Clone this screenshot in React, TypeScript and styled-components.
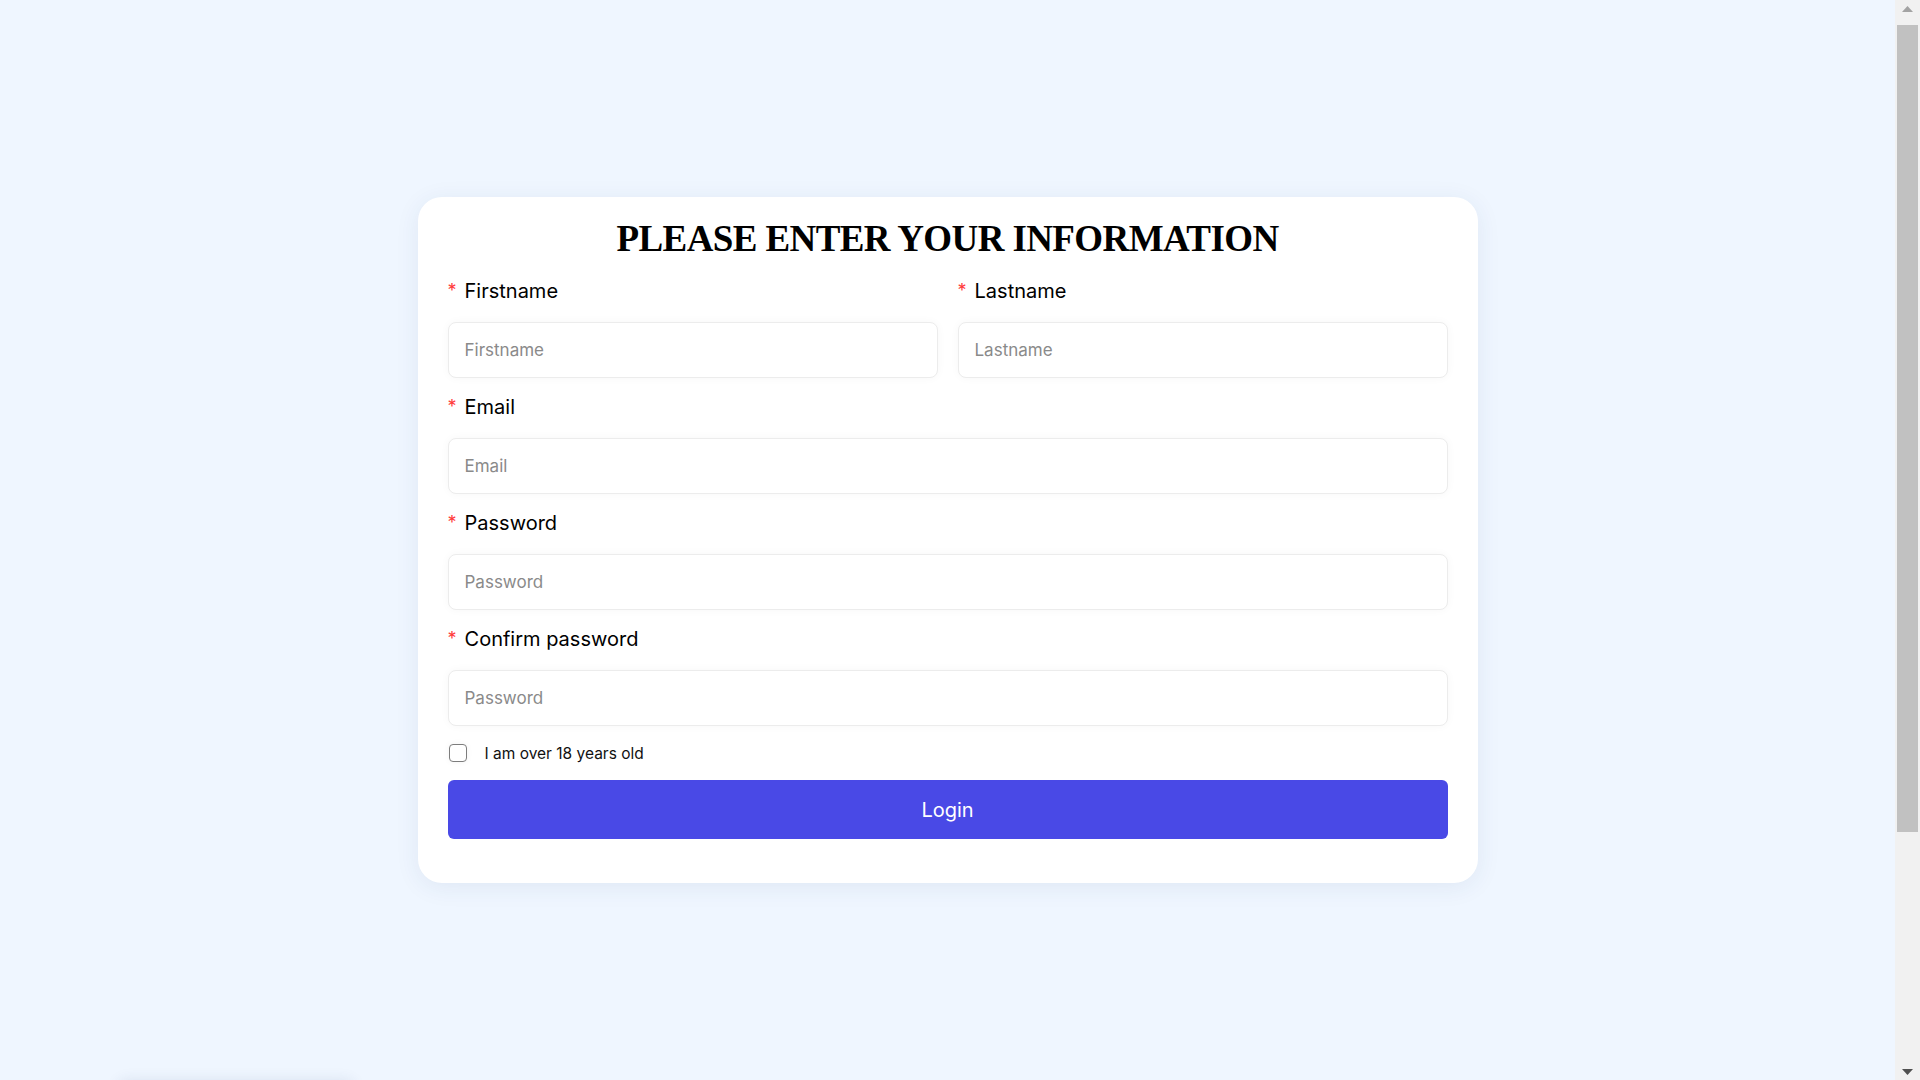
import React from "react";
import styled, { createGlobalStyle } from "styled-components";

const GlobalStyle = createGlobalStyle`
  html, body {
    margin: 0;
    padding: 0;
    background: #eff6ff;
  }
  body {
    font-family: Inter, "Noto Sans", Arial, sans-serif;
    color: #111;
  }
  * { box-sizing: border-box; }
`;

const Shell = styled.div`
  margin-right: 25px;
`;

const Page = styled.main`
  min-height: 100vh;
  display: flex;
  align-items: center;
  justify-content: center;
`;

const Card = styled.section`
  width: 1060px;
  background: #ffffff;
  border-radius: 24px;
  padding: 20px 30px 44px;
  box-shadow: 0 4px 24px rgba(40, 60, 110, 0.08);
`;

const Title = styled.h1`
  margin: 0 0 15px;
  text-align: center;
  font-family: "Liberation Serif", "Times New Roman", serif;
  font-weight: 700;
  font-size: 37px;
  line-height: 44px;
  letter-spacing: -0.6px;
  color: #000;
`;

const Form = styled.form`
  display: flex;
  flex-direction: column;
  gap: 14px;
`;

const TwoCols = styled.div`
  display: grid;
  grid-template-columns: 1fr 1fr;
  column-gap: 20px;
`;

const Field = styled.div`
  display: flex;
  flex-direction: column;
`;

const Label = styled.label`
  display: flex;
  align-items: baseline;
  height: 30px;
  font-size: 20px;
  line-height: 30px;
  margin-bottom: 16px;
  color: #000;
`;

const Required = styled.span`
  color: #ff3b3b;
  font-size: 18px;
  line-height: 1;
  margin-right: 8px;
  transform: translateY(-1px);
`;

const Input = styled.input`
  height: 56px;
  width: 100%;
  border: 1px solid #ececec;
  border-radius: 8px;
  padding: 0 16px;
  font-family: Inter, "Noto Sans", Arial, sans-serif;
  font-size: 17px;
  color: #222;
  background: #fff;
  box-shadow: 0 0 10px rgba(0, 0, 0, 0.035);
  outline: none;
  &::placeholder {
    color: #8a8a8a;
  }
`;

const CheckRow = styled.label`
  display: flex;
  align-items: center;
  height: 26px;
  gap: 18px;
  font-size: 15.5px;
  color: #111;
  padding-left: 1px;
`;

const Box = styled.input.attrs({ type: "checkbox" })`
  appearance: none;
  margin: 0;
  width: 18px;
  height: 18px;
  border: 1.5px solid #7d7d7d;
  border-radius: 4px;
  background: #fff;
  box-shadow: 0 0 6px rgba(0, 0, 0, 0.05);
`;

const Submit = styled.button`
  height: 59px;
  width: 100%;
  border: none;
  border-radius: 6px;
  background: #4949e6;
  color: #fff;
  font-family: Inter, "Noto Sans", Arial, sans-serif;
  font-size: 20px;
  cursor: pointer;
`;

const Below = styled.div`
  width: 236px;
  height: 312px;
  margin: 0 0 0 118px;
  background: #eff6ff;
  border-radius: 8px;
  box-shadow: 0 0 14px rgba(40, 60, 110, 0.1);
`;

/* Drawing of the window's vertical scrollbar, laid over the right edge */
const ScrollBar = styled.aside`
  position: fixed;
  top: 0;
  right: 0;
  width: 25px;
  height: 100vh;
  background: #f1f1f1;
  display: flex;
  flex-direction: column;
  align-items: center;
  padding: 0 2px;
`;

const ArrowBtn = styled.div`
  height: 17px;
  width: 100%;
  display: flex;
  align-items: center;
  justify-content: center;
  flex-shrink: 0;
`;

const Thumb = styled.div`
  width: 100%;
  height: 807px;
  margin-top: 8px;
  background: #c1c1c1;
`;

const Spring = styled.div`
  flex: 1;
`;

type FieldProps = { label: string; placeholder: string; type?: string };

const FormField = ({ label, placeholder, type = "text" }: FieldProps) => (
  <Field>
    <Label>
      <Required>*</Required>
      {label}
    </Label>
    <Input type={type} placeholder={placeholder} />
  </Field>
);

export default function App() {
  return (
    <>
      <GlobalStyle />
      <Shell>
        <Page>
          <Card>
            <Title>PLEASE ENTER YOUR INFORMATION</Title>
            <Form onSubmit={(e) => e.preventDefault()}>
              <TwoCols>
                <FormField label="Firstname" placeholder="Firstname" />
                <FormField label="Lastname" placeholder="Lastname" />
              </TwoCols>
              <FormField label="Email" placeholder="Email" />
              <FormField label="Password" placeholder="Password" type="password" />
              <FormField label="Confirm password" placeholder="Password" type="password" />
              <CheckRow>
                <Box />
                I am over 18 years old
              </CheckRow>
              <Submit type="submit">Login</Submit>
            </Form>
          </Card>
        </Page>
        <Below />
      </Shell>
      <ScrollBar aria-hidden>
        <ArrowBtn>
          <svg width="11" height="6" viewBox="0 0 11 6">
            <path d="M0 6 L5.5 0 L11 6 Z" fill="#a3a3a3" />
          </svg>
        </ArrowBtn>
        <Thumb />
        <Spring />
        <ArrowBtn>
          <svg width="11" height="6" viewBox="0 0 11 6">
            <path d="M0 0 L11 0 L5.5 6 Z" fill="#505050" />
          </svg>
        </ArrowBtn>
      </ScrollBar>
    </>
  );
}
